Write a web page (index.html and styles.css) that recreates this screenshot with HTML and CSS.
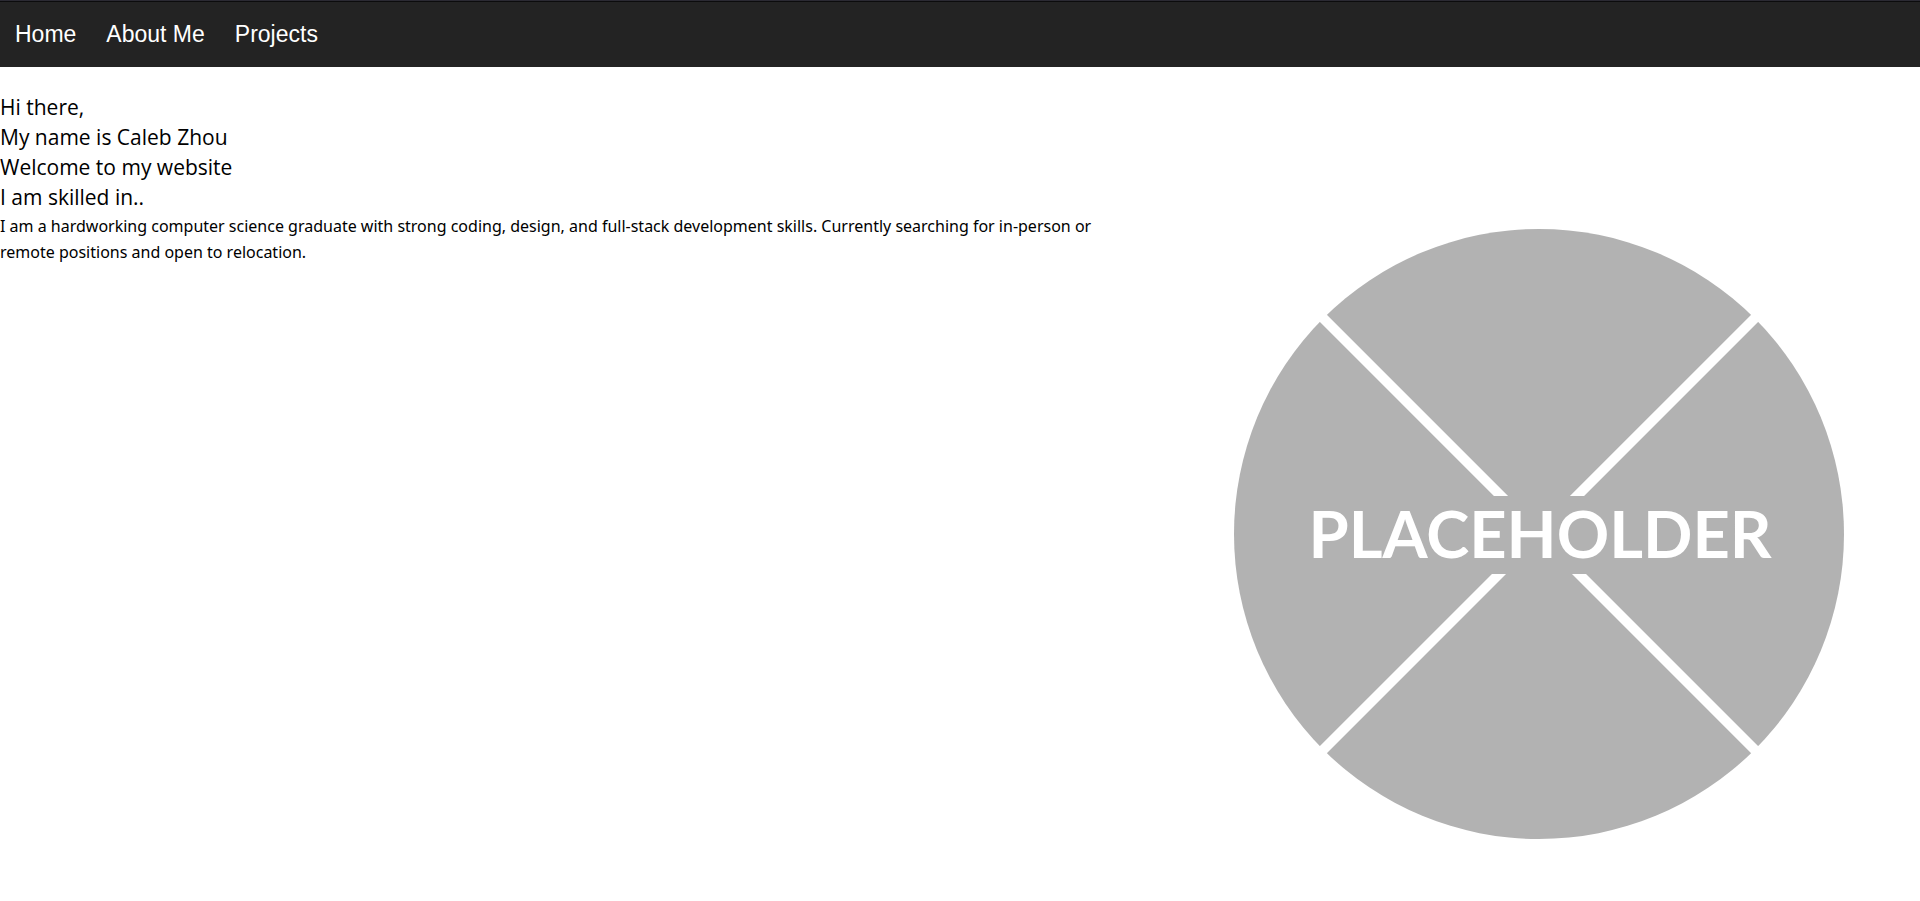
FILE: index.html
```html
<!DOCTYPE html>
<html lang="en">
<head>
<meta charset="utf-8">
<title>Caleb Zhou</title>
<link rel="stylesheet" href="styles.css">
</head>
<body>
<nav class="navbar">
  <a href="#home">Home</a>
  <a href="#about">About Me</a>
  <a href="#projects">Projects</a>
</nav>
<main class="intro">
  <section class="intro-text">
    <div class="greeting">
      <p>Hi there,</p>
      <p>My name is Caleb Zhou</p>
      <p>Welcome to my website</p>
      <p>I am skilled in..</p>
    </div>
    <p class="summary">I am a hardworking computer science graduate with strong coding, design, and full-stack development skills. Currently searching for in-person or remote positions and open to relocation.</p>
  </section>
  <svg class="portrait" viewBox="0 0 768 810" role="img" aria-label="Placeholder">
    <circle class="fill" cx="387" cy="443" r="305"/>
    <path class="cross" d="M157 213L617 673M617 213L157 673"/>
    <rect class="fill" x="300" y="405" width="174" height="78"/>
    <text class="label" x="388" y="467">PLACEHOLDER</text>
  </svg>
</main>
</body>
</html>
```
FILE: styles.css
```css
* {
  box-sizing: border-box;
}

body {
  margin: 0;
  background: #fff;
  color: #000;
  font-family: "Open Sans", "Noto Sans", sans-serif;
}

p {
  margin: 0;
}

.navbar {
  display: flex;
  border-top: 1px solid #2b2a33;
  background: #232323;
  box-shadow: inset 0 1px #0c0c0d;
}

.navbar a {
  padding: 19px 15px 18px;
  color: #fff;
  font-family: "Liberation Sans", Arial, sans-serif;
  font-size: 23px;
  line-height: 29px;
  text-decoration: none;
}

.intro {
  display: grid;
  grid-template-columns: 3fr 2fr;
  padding-top: 24px;
}

.greeting {
  padding: 1px 0;
  font-size: 21px;
  line-height: 30px;
}

.summary {
  padding-right: 24px;
  font-family: "Noto Sans", sans-serif;
  font-size: 16px;
  line-height: 26px;
}

.portrait {
  display: block;
  width: 100%;
}

.fill {
  fill: #b2b2b2;
}

.cross {
  fill: none;
  stroke: #fff;
  stroke-width: 10px;
}

.label {
  fill: #fff;
  font-family: Lato, sans-serif;
  font-size: 65px;
  font-weight: 700;
  text-anchor: middle;
}
```
